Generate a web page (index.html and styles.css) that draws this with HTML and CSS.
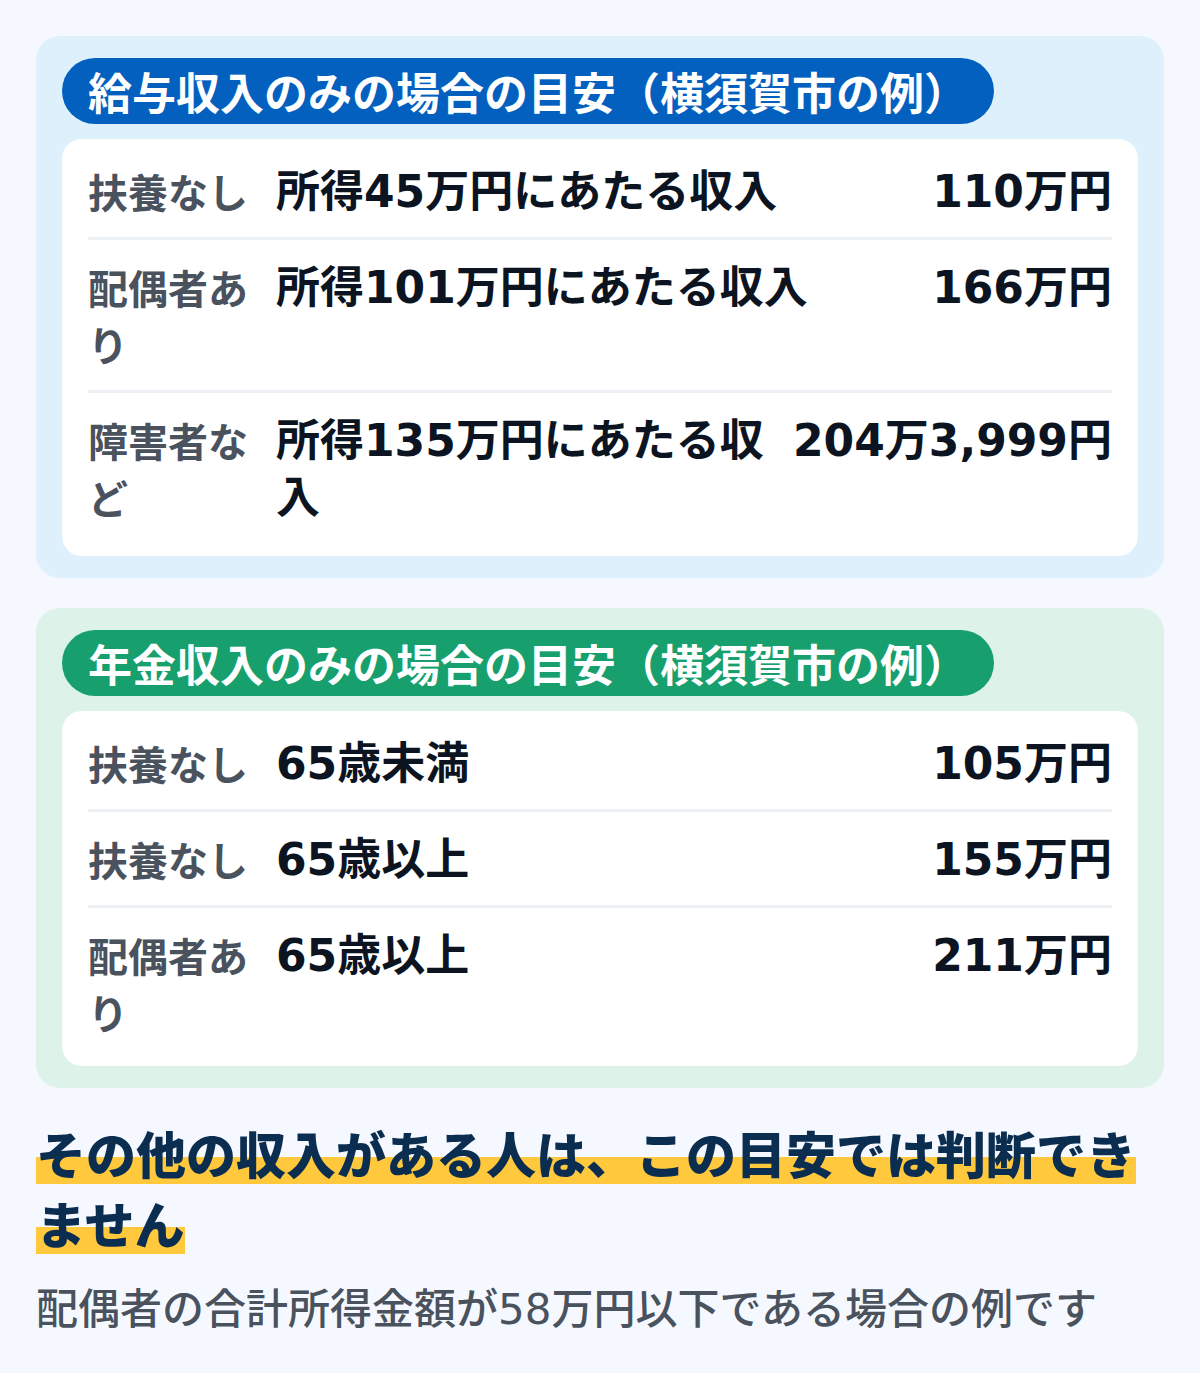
FILE: index.html
```html
<!DOCTYPE html>
<html lang="ja">
<head>
    <meta charset="UTF-8">
    <meta name="viewport" content="width=device-width, initial-scale=1.0">
    <title>所得の目安</title>
    <link rel="stylesheet" href="styles.css">
</head>
<body>
    <div class="page">
        <!-- 給与収入 -->
        <section class="panel panel-salary">
            <h2 class="pill">給与収入のみの場合の目安（横須賀市の例）</h2>
            <div class="card">
                <div class="row">
                    <div class="label">扶養なし</div>
                    <div class="desc">所得45万円にあたる収入</div>
                    <div class="value">110万円</div>
                </div>
                <div class="row">
                    <div class="label">配偶者あり</div>
                    <div class="desc">所得101万円にあたる収入</div>
                    <div class="value">166万円</div>
                </div>
                <div class="row">
                    <div class="label">障害者など</div>
                    <div class="desc">所得135万円にあたる収入</div>
                    <div class="value">204万3,999円</div>
                </div>
            </div>
        </section>

        <!-- 年金収入 -->
        <section class="panel panel-pension">
            <h2 class="pill">年金収入のみの場合の目安（横須賀市の例）</h2>
            <div class="card">
                <div class="row">
                    <div class="label">扶養なし</div>
                    <div class="desc">65歳未満</div>
                    <div class="value">105万円</div>
                </div>
                <div class="row">
                    <div class="label">扶養なし</div>
                    <div class="desc">65歳以上</div>
                    <div class="value">155万円</div>
                </div>
                <div class="row">
                    <div class="label">配偶者あり</div>
                    <div class="desc">65歳以上</div>
                    <div class="value">211万円</div>
                </div>
            </div>
        </section>

        <h3 class="notice"><span class="marker">その他の収入がある人は、この目安では判断できません</span></h3>
        <p class="note">配偶者の合計所得金額が58万円以下である場合の例です</p>
    </div>
</body>
</html>
```

FILE: styles.css
```css
/* Base */
body {
    margin: 0;
    padding: 0;
    background: #f5f9ff;
    font-family: 'DejaVu Sans', 'Noto Sans CJK JP', sans-serif;
    color: #0b1420;
}

.page {
    padding: 36px 36px 40px;
    display: flex;
    flex-direction: column;
    gap: 30px;
}

/* Panels */
.panel {
    border-radius: 24px;
    padding: 22px 26px;
    display: flex;
    flex-direction: column;
    gap: 15px;
}

.panel-salary { background: #ddf0fc; }
.panel-pension { background: #ddf3e9; }

.pill {
    align-self: flex-start;
    margin: 0;
    padding: 4px 26px;
    border-radius: 999px;
    color: #fff;
    font-family: 'Noto Sans CJK JP', sans-serif;
    font-size: 44px;
    line-height: 58px;
    font-weight: 700;
}

.panel-salary .pill { background: #0460bf; }
.panel-pension .pill { background: #17a06e; }

/* Card rows */
.card {
    background: #fff;
    border-radius: 20px;
    padding: 5px 26px 13px;
}

.panel-pension .card { padding-bottom: 8px; }

.row {
    display: flex;
    gap: 20px;
    padding: 19px 0 17px;
    border-bottom: 3px solid #edf1f5;
}

.row:last-child { border-bottom: none; }

.label {
    flex: 0 0 168px;
    font-family: 'Noto Sans CJK JP', sans-serif;
    font-size: 40px;
    line-height: 57px;
    font-weight: 700;
    color: #4a525e;
}

.desc, .value {
    font-size: 44px;
    line-height: 57px;
    font-weight: 700;
    color: #0b1420;
}

.desc {
    flex: 1;
    min-width: 0;
}

.value {
    flex: none;
    white-space: nowrap;
    text-align: right;
}

/* Notice */
.notice {
    margin: -1px 0 0;
    font-family: 'Noto Sans CJK JP', sans-serif;
    font-size: 50px;
    line-height: 70px;
    font-weight: 900;
    color: #0a2d50;
}

.marker {
    background: linear-gradient(transparent 57%, #ffc83d 57%, #ffc83d 94%, transparent 94%);
}

.note {
    margin: -7px 0 0;
    font-size: 42px;
    line-height: 59px;
    font-weight: 500;
    color: #4a525e;
}
```
